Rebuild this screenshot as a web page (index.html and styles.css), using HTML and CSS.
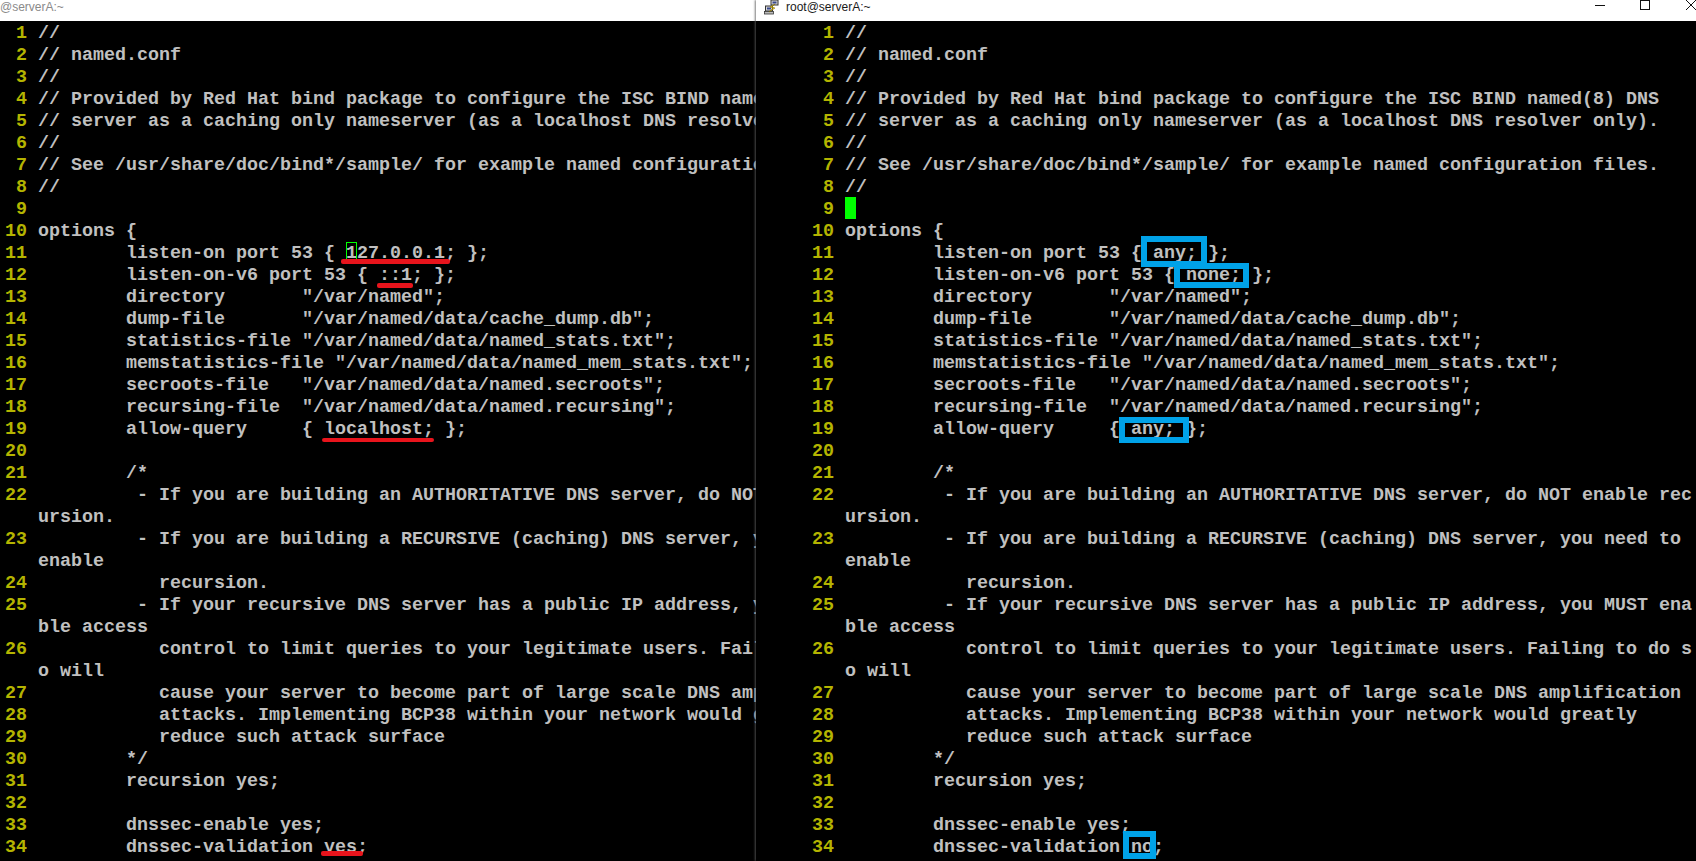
FILE: index.html
```html
<!DOCTYPE html>
<html lang="en">
<head>
<meta charset="utf-8">
<title>named.conf</title>
<link rel="stylesheet" href="styles.css">
</head>
<body>
<div class="screen">
  <section class="window window-left">
    <header class="titlebar"><span class="title title-dim">@serverA:~</span></header>
    <div class="terminal">
<div class="row"><span class="num">1</span><span class="code">//</span></div>
<div class="row"><span class="num">2</span><span class="code">// named.conf</span></div>
<div class="row"><span class="num">3</span><span class="code">//</span></div>
<div class="row"><span class="num">4</span><span class="code">// Provided by Red Hat bind package to configure the ISC BIND named(8) DNS</span></div>
<div class="row"><span class="num">5</span><span class="code">// server as a caching only nameserver (as a localhost DNS resolver only).</span></div>
<div class="row"><span class="num">6</span><span class="code">//</span></div>
<div class="row"><span class="num">7</span><span class="code">// See /usr/share/doc/bind*/sample/ for example named configuration files.</span></div>
<div class="row"><span class="num">8</span><span class="code">//</span></div>
<div class="row"><span class="num">9</span><span class="code"></span></div>
<div class="row"><span class="num">10</span><span class="code">options {</span></div>
<div class="row"><span class="num">11</span><span class="code">        listen-on port 53 { 127.0.0.1; };</span></div>
<div class="row"><span class="num">12</span><span class="code">        listen-on-v6 port 53 { ::1; };</span></div>
<div class="row"><span class="num">13</span><span class="code">        directory       "/var/named";</span></div>
<div class="row"><span class="num">14</span><span class="code">        dump-file       "/var/named/data/cache_dump.db";</span></div>
<div class="row"><span class="num">15</span><span class="code">        statistics-file "/var/named/data/named_stats.txt";</span></div>
<div class="row"><span class="num">16</span><span class="code">        memstatistics-file "/var/named/data/named_mem_stats.txt";</span></div>
<div class="row"><span class="num">17</span><span class="code">        secroots-file   "/var/named/data/named.secroots";</span></div>
<div class="row"><span class="num">18</span><span class="code">        recursing-file  "/var/named/data/named.recursing";</span></div>
<div class="row"><span class="num">19</span><span class="code">        allow-query     { localhost; };</span></div>
<div class="row"><span class="num">20</span><span class="code"></span></div>
<div class="row"><span class="num">21</span><span class="code">        /*</span></div>
<div class="row"><span class="num">22</span><span class="code">         - If you are building an AUTHORITATIVE DNS server, do NOT enable rec</span></div>
<div class="row"><span class="num"></span><span class="code">ursion.</span></div>
<div class="row"><span class="num">23</span><span class="code">         - If you are building a RECURSIVE (caching) DNS server, you need to</span></div>
<div class="row"><span class="num"></span><span class="code">enable</span></div>
<div class="row"><span class="num">24</span><span class="code">           recursion.</span></div>
<div class="row"><span class="num">25</span><span class="code">         - If your recursive DNS server has a public IP address, you MUST ena</span></div>
<div class="row"><span class="num"></span><span class="code">ble access</span></div>
<div class="row"><span class="num">26</span><span class="code">           control to limit queries to your legitimate users. Failing to do s</span></div>
<div class="row"><span class="num"></span><span class="code">o will</span></div>
<div class="row"><span class="num">27</span><span class="code">           cause your server to become part of large scale DNS amplification</span></div>
<div class="row"><span class="num">28</span><span class="code">           attacks. Implementing BCP38 within your network would greatly</span></div>
<div class="row"><span class="num">29</span><span class="code">           reduce such attack surface</span></div>
<div class="row"><span class="num">30</span><span class="code">        */</span></div>
<div class="row"><span class="num">31</span><span class="code">        recursion yes;</span></div>
<div class="row"><span class="num">32</span><span class="code"></span></div>
<div class="row"><span class="num">33</span><span class="code">        dnssec-enable yes;</span></div>
<div class="row"><span class="num">34</span><span class="code">        dnssec-validation yes;</span></div>
      <i class="mark cursor-outline"></i>
      <i class="mark red red-1"></i>
      <i class="mark red red-2"></i>
      <i class="mark red red-3"></i>
      <i class="mark red red-4"></i>
    </div>
  </section>
  <section class="window window-right">
    <header class="titlebar">
      <svg class="app-icon" viewBox="0 0 16 16" aria-hidden="true">
        <rect x="7" y="1" width="7" height="5" fill="#d8d8d8" stroke="#333"/>
        <rect x="8.5" y="2.5" width="4" height="2" fill="#3a4a8c"/>
        <rect x="1.5" y="7" width="7" height="5" fill="#d8d8d8" stroke="#333"/>
        <rect x="3" y="8.5" width="4" height="2" fill="#3a4a8c"/>
        <rect x="0.5" y="12.5" width="9" height="2.5" fill="#bbb" stroke="#333" stroke-width=".8"/>
        <path d="M11 5 L6 8 L9 9 L5 13 L11 9 L8 8 Z" fill="#f2d21b" stroke="#7a6500" stroke-width=".5"/>
      </svg>
      <span class="title">root@serverA:~</span>
      <div class="controls">
        <svg class="ctl" viewBox="0 0 11 11" aria-hidden="true"><path d="M1 5.5H11" stroke="#111" fill="none"/></svg>
        <svg class="ctl" viewBox="0 0 11 11" aria-hidden="true"><rect x=".5" y=".5" width="9" height="9" stroke="#111" fill="none"/></svg>
        <svg class="ctl ctl-close" viewBox="0 0 10 10" aria-hidden="true"><path d="M0 0L10 10M10 0L0 10" stroke="#111" fill="none"/></svg>
      </div>
    </header>
    <div class="terminal terminal-right">
<div class="row"><span class="num">1</span><span class="code">//</span></div>
<div class="row"><span class="num">2</span><span class="code">// named.conf</span></div>
<div class="row"><span class="num">3</span><span class="code">//</span></div>
<div class="row"><span class="num">4</span><span class="code">// Provided by Red Hat bind package to configure the ISC BIND named(8) DNS</span></div>
<div class="row"><span class="num">5</span><span class="code">// server as a caching only nameserver (as a localhost DNS resolver only).</span></div>
<div class="row"><span class="num">6</span><span class="code">//</span></div>
<div class="row"><span class="num">7</span><span class="code">// See /usr/share/doc/bind*/sample/ for example named configuration files.</span></div>
<div class="row"><span class="num">8</span><span class="code">//</span></div>
<div class="row"><span class="num">9</span><span class="code"><b class="block-cursor"></b></span></div>
<div class="row"><span class="num">10</span><span class="code">options {</span></div>
<div class="row"><span class="num">11</span><span class="code">        listen-on port 53 { any; };</span></div>
<div class="row"><span class="num">12</span><span class="code">        listen-on-v6 port 53 { none; };</span></div>
<div class="row"><span class="num">13</span><span class="code">        directory       "/var/named";</span></div>
<div class="row"><span class="num">14</span><span class="code">        dump-file       "/var/named/data/cache_dump.db";</span></div>
<div class="row"><span class="num">15</span><span class="code">        statistics-file "/var/named/data/named_stats.txt";</span></div>
<div class="row"><span class="num">16</span><span class="code">        memstatistics-file "/var/named/data/named_mem_stats.txt";</span></div>
<div class="row"><span class="num">17</span><span class="code">        secroots-file   "/var/named/data/named.secroots";</span></div>
<div class="row"><span class="num">18</span><span class="code">        recursing-file  "/var/named/data/named.recursing";</span></div>
<div class="row"><span class="num">19</span><span class="code">        allow-query     { any; };</span></div>
<div class="row"><span class="num">20</span><span class="code"></span></div>
<div class="row"><span class="num">21</span><span class="code">        /*</span></div>
<div class="row"><span class="num">22</span><span class="code">         - If you are building an AUTHORITATIVE DNS server, do NOT enable rec</span></div>
<div class="row"><span class="num"></span><span class="code">ursion.</span></div>
<div class="row"><span class="num">23</span><span class="code">         - If you are building a RECURSIVE (caching) DNS server, you need to</span></div>
<div class="row"><span class="num"></span><span class="code">enable</span></div>
<div class="row"><span class="num">24</span><span class="code">           recursion.</span></div>
<div class="row"><span class="num">25</span><span class="code">         - If your recursive DNS server has a public IP address, you MUST ena</span></div>
<div class="row"><span class="num"></span><span class="code">ble access</span></div>
<div class="row"><span class="num">26</span><span class="code">           control to limit queries to your legitimate users. Failing to do s</span></div>
<div class="row"><span class="num"></span><span class="code">o will</span></div>
<div class="row"><span class="num">27</span><span class="code">           cause your server to become part of large scale DNS amplification</span></div>
<div class="row"><span class="num">28</span><span class="code">           attacks. Implementing BCP38 within your network would greatly</span></div>
<div class="row"><span class="num">29</span><span class="code">           reduce such attack surface</span></div>
<div class="row"><span class="num">30</span><span class="code">        */</span></div>
<div class="row"><span class="num">31</span><span class="code">        recursion yes;</span></div>
<div class="row"><span class="num">32</span><span class="code"></span></div>
<div class="row"><span class="num">33</span><span class="code">        dnssec-enable yes;</span></div>
<div class="row"><span class="num">34</span><span class="code">        dnssec-validation no;</span></div>
      <i class="mark blue blue-1"></i>
      <i class="mark blue blue-2"></i>
      <i class="mark blue blue-3"></i>
      <i class="mark blue blue-4"></i>
    </div>
  </section>
</div>
</body>
</html>
```
FILE: styles.css
```css
* { box-sizing: border-box; }
html, body { margin: 0; height: 100%; background: #000; overflow: hidden; }

.screen { display: flex; width: 1696px; height: 861px; }

.window { display: flex; flex-direction: column; height: 100%; overflow: hidden; }
.window-left { width: 756px; flex: none; }
.window-right { flex: 1; position: relative; box-shadow: -1px 0 2px rgba(90, 90, 90, .8); }

.titlebar {
  flex: none; height: 21px; background: #fff; display: flex; align-items: center;
  font: 12px/1 "Liberation Sans", Arial, sans-serif; color: #1a1a1a;
}
.title { position: relative; top: -4px; }
.title-dim { color: #8a8a8a; }
.app-icon { width: 16px; height: 16px; margin: 0 6px 0 8px; position: relative; top: -4px; }
.controls { margin-left: auto; display: flex; align-items: flex-start; gap: 35px; height: 100%; }
.ctl { width: 11px; height: 11px; display: block; }
.ctl-close { width: 10px; height: 10px; }

.terminal {
  position: relative; flex: 1; background: #000; padding: 2px 0 0 5px;
  font: bold 18.33px/22px "Liberation Mono", monospace; color: #c0c0c0;
}
.terminal-right { padding-left: 56px; }

.row { display: flex; height: 22px; white-space: pre; }
.num { flex: none; width: 22px; margin-right: 11px; text-align: right; color: #b4b400; }
.code { flex: none; display: block; }

.block-cursor { display: block; width: 11px; height: 22px; position: relative; top: -2px; background: #00ff00; }

.mark { position: absolute; display: block; }
.cursor-outline { left: 346px; top: 221px; width: 11px; height: 18px; border: 1px solid #00ff00; }

.red { background: #e8141c; border-radius: 2px; }
.red-1 { left: 341px; top: 238px; width: 109px; height: 5px; }
.red-2 { left: 377px; top: 262px; width: 36px; height: 5px; }
.red-3 { left: 322px; top: 417px; width: 112px; height: 4px; }
.red-4 { left: 321px; top: 830px; width: 42px; height: 5px; }

.blue { border: 6px solid #00a2e8; }
.blue-1 { left: 385px; top: 215px; width: 66px; height: 31px; }
.blue-2 { left: 418px; top: 242px; width: 75px; height: 25px; }
.blue-3 { left: 363px; top: 396px; width: 70px; height: 26px; }
.blue-4 { left: 367px; top: 810px; width: 33px; height: 28px; }
```
